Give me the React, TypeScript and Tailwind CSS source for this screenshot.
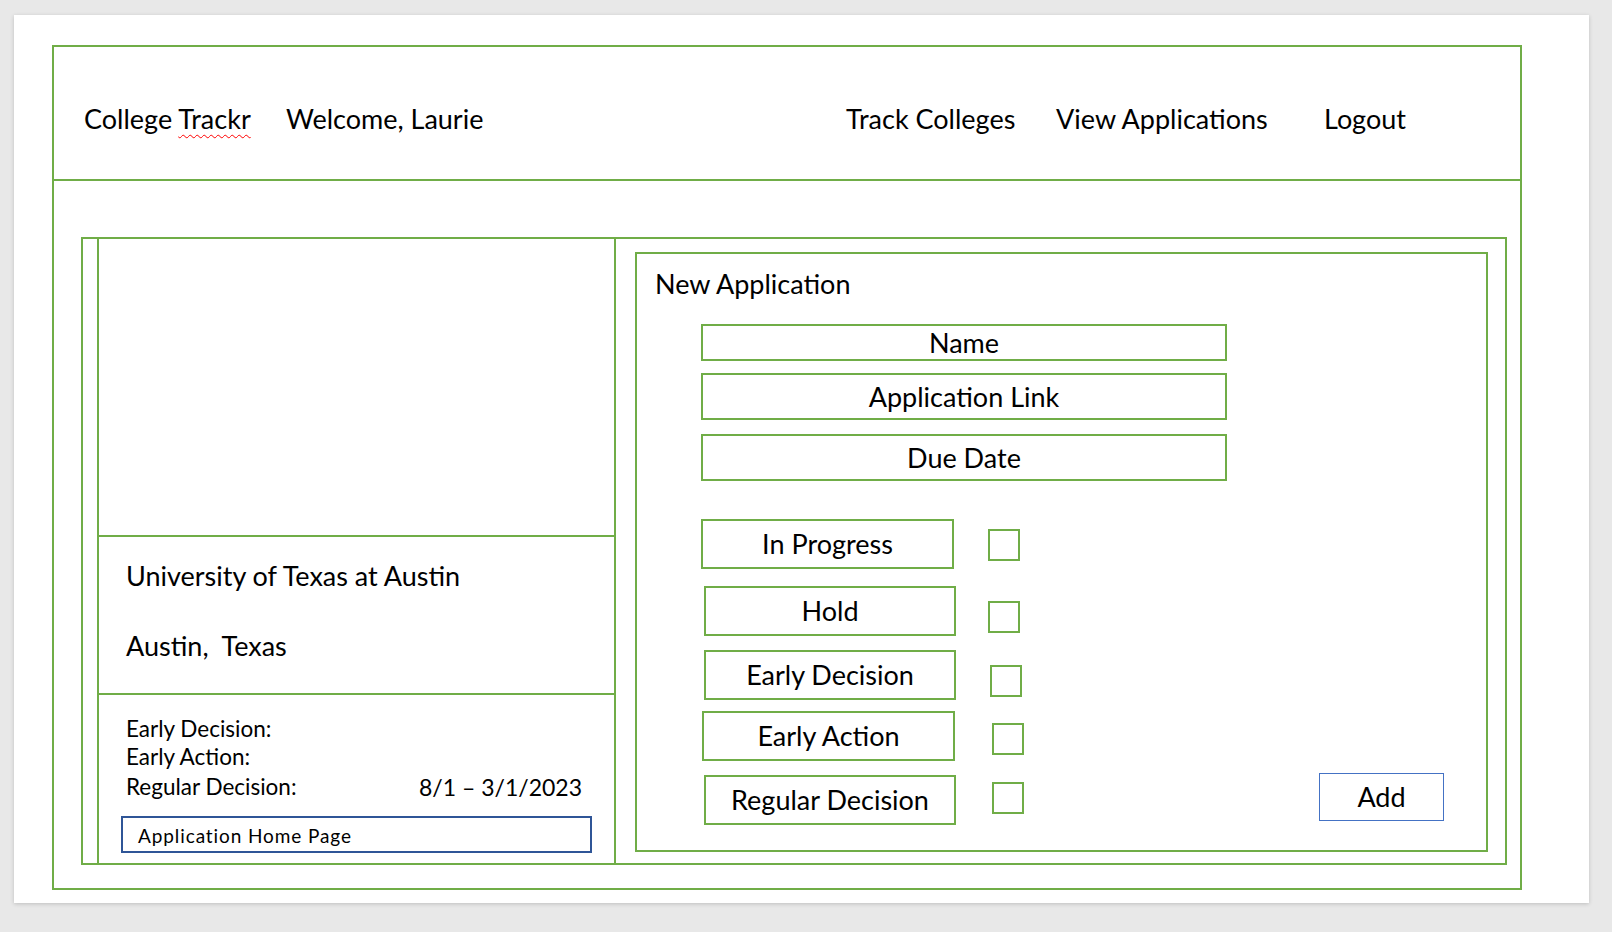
const statuses = [
  { label: "In Progress", row: "mt-[38px] ml-[64px]", box: "w-[253px]", cb: "ml-[34px] mt-[10px]" },
  { label: "Hold", row: "mt-[17px] ml-[67px]", box: "w-[252px]", cb: "ml-[32px] mt-[15px]" },
  { label: "Early Decision", row: "mt-[14px] ml-[67px]", box: "w-[252px]", cb: "ml-[34px] mt-[15px]" },
  { label: "Early Action", row: "mt-[11px] ml-[65px]", box: "w-[253px]", cb: "ml-[37px] mt-[12px]" },
  { label: "Regular Decision", row: "mt-[14px] ml-[67px]", box: "w-[252px]", cb: "ml-[36px] mt-[7px]" },
];

const fields = [
  { label: "Name", h: "h-[37px]", mt: "mt-[24px]" },
  { label: "Application Link", h: "h-[47px]", mt: "mt-[12px]" },
  { label: "Due Date", h: "h-[47px]", mt: "mt-[14px]" },
];

const App = () => {
  return (
    <div className="min-h-screen w-full bg-[#e8e8e8] pt-[15px] pl-[14px] text-black font-['Lato',sans-serif]">
      <div className="w-[1575px] h-[888px] bg-white shadow-[0_1px_4px_rgba(0,0,0,0.18)] pt-[30px] pl-[38px]">
        <div className="w-[1470px] h-[845px] border-2 border-[#70ad47] flex flex-col">
          {/* top bar */}
          <header className="h-[134px] shrink-0 border-b-2 border-[#70ad47] flex items-center pt-[12px] pl-[30px] text-[27px] leading-[32px]">
            <div className="w-[202px]">
              College{" "}
              <span className="underline decoration-wavy decoration-[#ff0000] decoration-1 underline-offset-[5px]">
                Trackr
              </span>
            </div>
            <div className="w-[560px]">Welcome, Laurie</div>
            <div className="w-[210px]">Track Colleges</div>
            <div className="w-[268px]">View Applications</div>
            <div>Logout</div>
          </header>

          <div className="pt-[56px] pl-[27px]">
            <div className="w-[1426px] h-[628px] border-2 border-[#70ad47] flex">
              {/* college card */}
              <div className="ml-[14px] w-[519px] border-l-2 border-r-2 border-[#70ad47] flex flex-col">
                <div className="h-[298px] border-b-2 border-[#70ad47]" />
                <div className="h-[158px] border-b-2 border-[#70ad47] pt-[23px] pl-[27px] text-[27px] leading-[32px]">
                  <div>University of Texas at Austin</div>
                  <div className="mt-[38px] whitespace-pre">Austin,  Texas</div>
                </div>
                <div className="px-[22px] pt-[20px] text-[22.5px] leading-[28px]">
                  <div className="pl-[5px]">Early Decision:</div>
                  <div className="pl-[5px]">Early Action:</div>
                  <div className="pl-[5px] pr-[10px] mt-[2px] flex justify-between">
                    <span>Regular Decision:</span>
                    <span className="text-[23px]">8/1 – 3/1/2023</span>
                  </div>
                  <div className="mt-[15px] h-[37px] border-2 border-[#2f5597] flex items-center pl-[15px] pt-[3px] text-[19px] tracking-[0.9px]">
                    Application Home Page
                  </div>
                </div>
              </div>

              {/* new application form */}
              <div className="ml-[19px] mr-[17px] mt-[13px] mb-[11px] flex-1 border-2 border-[#70ad47] flex flex-col pt-[14px] text-[27px] leading-[32px]">
                <div className="pl-[18px]">New Application</div>
                {fields.map((f) => (
                  <div
                    key={f.label}
                    className={`${f.h} ${f.mt} ml-[64px] w-[526px] border-2 border-[#70ad47] flex items-center justify-center`}
                  >
                    {f.label}
                  </div>
                ))}
                <div className="flex items-end">
                  <div className="flex flex-col">
                    {statuses.map((s) => (
                      <div key={s.label} className={`${s.row} flex items-start`}>
                        <div className={`${s.box} h-[50px] border-2 border-[#70ad47] flex items-center justify-center`}>
                          {s.label}
                        </div>
                        <div className={`${s.cb} w-[32px] h-[32px] border-2 border-[#70ad47]`} />
                      </div>
                    ))}
                  </div>
                  <button className="ml-auto mr-[42px] mb-[4px] w-[125px] h-[48px] border border-[#4472c4] flex items-center justify-center">
                    Add
                  </button>
                </div>
              </div>
            </div>
          </div>
        </div>
      </div>
    </div>
  );
};

export default App;
